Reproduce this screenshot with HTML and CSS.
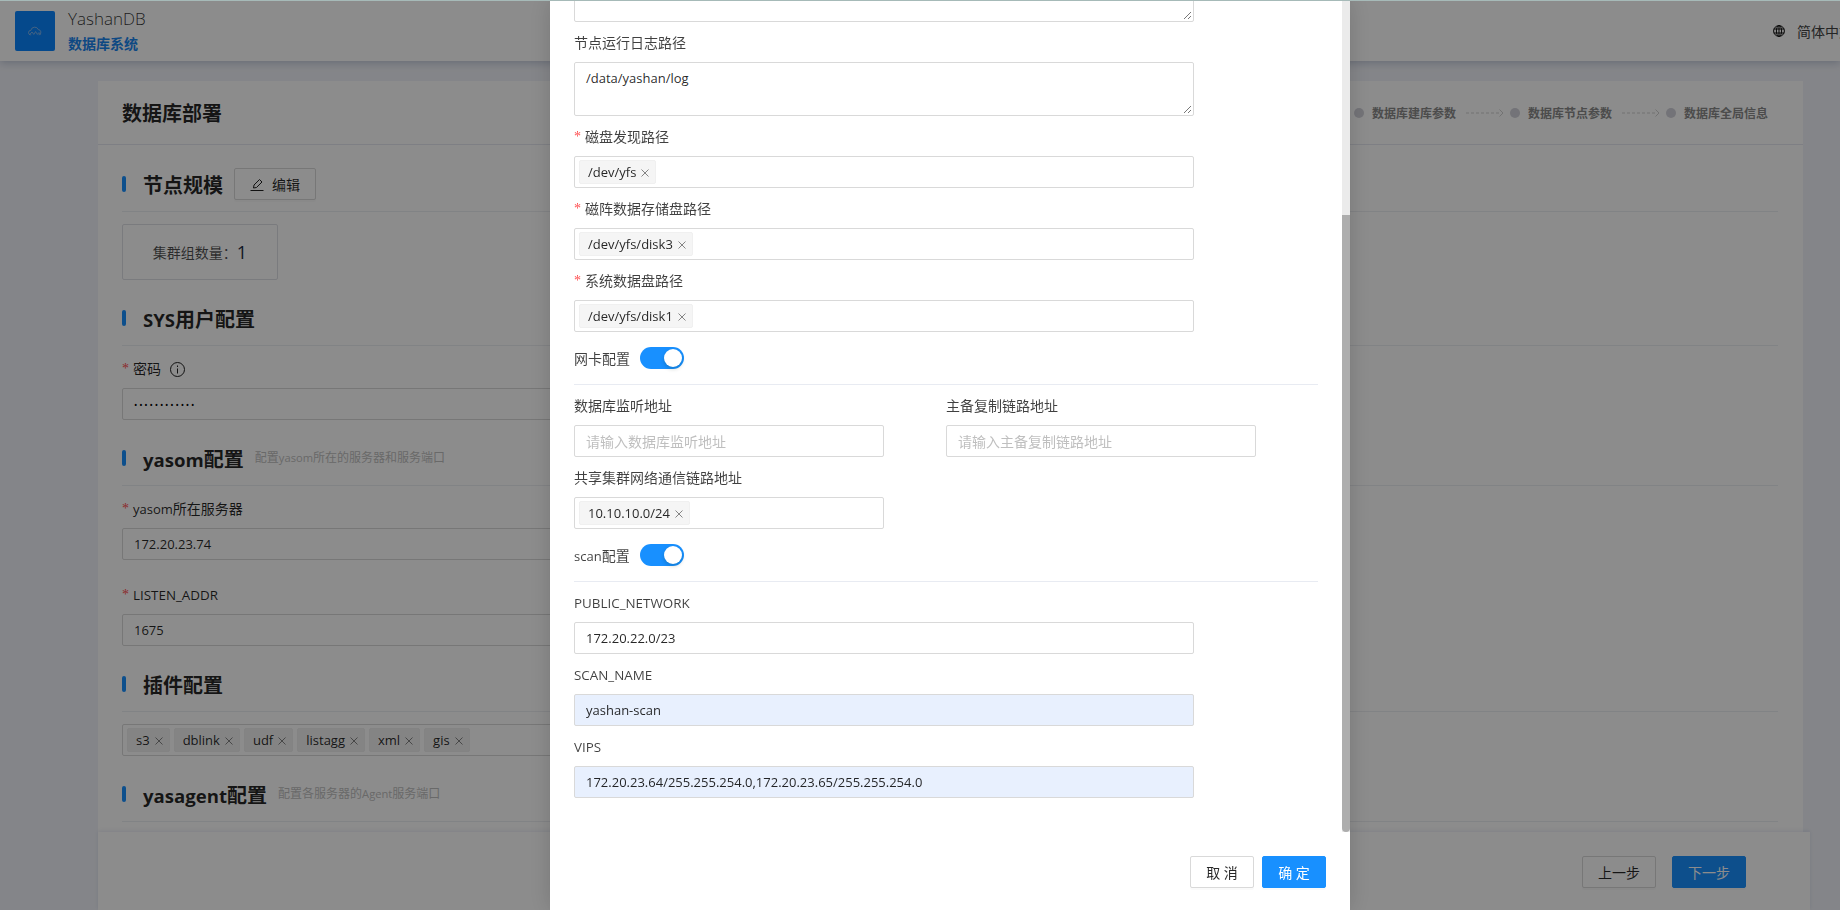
FILE: index.html
```html
<!DOCTYPE html>
<html lang="zh-CN">
<head>
<meta charset="utf-8">
<title>YashanDB 数据库部署</title>
<link rel="stylesheet" href="styles.css">
</head>
<body>
<div class="topline"></div>
<div class="app">
  <header class="topbar">
    <div class="logo">
      <svg width="14" height="10" viewBox="0 0 14 10" fill="none" stroke="#a9c4e6" stroke-width=".7"><path d="M3.2 8.800H2.600A2.200 2.200 0 0 1 2.800 4.400 4 4 0 0 1 10.400 3.600 2.700 2.700 0 0 1 11.200 8.800H10.600"/><path d="M1.600 8.600 4 6l1.800 2.400L7.600 5.600l1.800 2.800L11 6.600 12.600 8.600"/></svg>
    </div>
    <div class="brand">
      <div class="brand-name">YashanDB</div>
      <div class="brand-sub">数据库系统</div>
    </div>
    <div class="lang">
      <svg width="12" height="12" viewBox="0 0 12 12" fill="none" stroke="#111" stroke-width="1"><circle cx="6" cy="6" r="5.400"/><ellipse cx="6" cy="6" rx="2.600" ry="5.400"/><path d="M.8 4h10.400M.8 8h10.400M6 .6v10.800"/></svg>
      <span>简体中文</span>
    </div>
  </header>
  <main class="card">
    <div class="card-head">
      <h1 class="card-title">数据库部署</h1>
      <div class="steps">
        <span class="dot"></span><span class="step-text">数据库建库参数</span>
        <svg class="step-arrow" width="38" height="8" viewBox="0 0 38 8" fill="none" stroke="#cfcfcf"><path d="M0 4h33" stroke-dasharray="3 2"/><path d="M33.500 .5 37 4l-3.500 3.500"/></svg>
        <span class="dot"></span><span class="step-text">数据库节点参数</span>
        <svg class="step-arrow" width="38" height="8" viewBox="0 0 38 8" fill="none" stroke="#cfcfcf"><path d="M0 4h33" stroke-dasharray="3 2"/><path d="M33.500 .5 37 4l-3.500 3.500"/></svg>
        <span class="dot"></span><span class="step-text">数据库全局信息</span>
      </div>
    </div>
    <div class="card-body">
      <section class="section">
        <div class="sec-head">
          <h2 class="sec-title">节点规模</h2>
          <button class="btn btn-edit">
            <svg width="14" height="13" viewBox="0 0 14 13" fill="none" stroke="#222" stroke-width="1"><path d="M.5 12.500h13"/><path d="M3.500 10 4 7 9.500 1.500l2.500 2.500L6.500 9.500z"/></svg>
            <span>编辑</span>
          </button>
        </div>
        <div class="stat"><span class="stat-label">集群组数量：</span><span class="stat-value">1</span></div>
      </section>
      <section class="section">
        <div class="sec-head"><h2 class="sec-title"><span class="lt">SYS</span>用户配置</h2></div>
        <div class="page-item">
          <div class="label"><span class="star">*</span>密码
            <svg class="info" width="15" height="15" viewBox="0 0 15 15" fill="none" stroke="#222"><circle cx="7.500" cy="7.500" r="7"/><path d="M7.500 6.500v5M7.500 3.500v1.500"/></svg>
          </div>
          <div class="field dots">••••••••••••</div>
        </div>
      </section>
      <section class="section">
        <div class="sec-head"><h2 class="sec-title"><span class="lt">yasom</span>配置</h2><span class="hint">配置<span class="lt">yasom</span>所在的服务器和服务端口</span></div>
        <div class="page-item">
          <div class="label"><span class="star">*</span><span class="lt">yasom</span>所在服务器</div>
          <div class="field">172.20.23.74</div>
        </div>
        <div class="page-item">
          <div class="label"><span class="star">*</span><span class="caps">LISTEN_ADDR</span></div>
          <div class="field">1675</div>
        </div>
      </section>
      <section class="section">
        <div class="sec-head"><h2 class="sec-title">插件配置</h2></div>
        <div class="field tags">
          <span class="tag">s3<svg class="x" viewBox="0 0 8 8"><path d="M.5.5l7 7M7.500.5l-7 7"/></svg></span>
          <span class="tag">dblink<svg class="x" viewBox="0 0 8 8"><path d="M.5.5l7 7M7.500.5l-7 7"/></svg></span>
          <span class="tag">udf<svg class="x" viewBox="0 0 8 8"><path d="M.5.5l7 7M7.500.5l-7 7"/></svg></span>
          <span class="tag">listagg<svg class="x" viewBox="0 0 8 8"><path d="M.5.5l7 7M7.500.5l-7 7"/></svg></span>
          <span class="tag">xml<svg class="x" viewBox="0 0 8 8"><path d="M.5.5l7 7M7.500.5l-7 7"/></svg></span>
          <span class="tag">gis<svg class="x" viewBox="0 0 8 8"><path d="M.5.5l7 7M7.500.5l-7 7"/></svg></span>
        </div>
      </section>
      <section class="section">
        <div class="sec-head"><h2 class="sec-title"><span class="lt">yasagent</span>配置</h2><span class="hint">配置各服务器的<span class="lt">Agent</span>服务端口</span></div>
      </section>
    </div>
  </main>
  <footer class="page-foot">
    <button class="btn btn-wide">上一步</button>
    <button class="btn btn-wide btn-primary">下一步</button>
  </footer>
</div>
<div class="mask"></div>
<div class="modal">
  <div class="modal-body">
    <div class="form">
      <div class="field area area-cut"><svg class="grip" width="9" height="9" viewBox="0 0 9 9" stroke="#777"><path d="M1 8 8 1M5 8 8 5"/></svg></div>
      <div>
        <div class="mlabel">节点运行日志路径</div>
        <div class="field area">/data/yashan/log<svg class="grip" width="9" height="9" viewBox="0 0 9 9" stroke="#777"><path d="M1 8 8 1M5 8 8 5"/></svg></div>
      </div>
      <div>
        <div class="mlabel"><span class="star">*</span>磁盘发现路径</div>
        <div class="field tags wide"><span class="tag light">/dev/yfs<svg class="x" viewBox="0 0 8 8"><path d="M.5.5l7 7M7.500.5l-7 7"/></svg></span></div>
      </div>
      <div>
        <div class="mlabel"><span class="star">*</span>磁阵数据存储盘路径</div>
        <div class="field tags wide"><span class="tag light">/dev/yfs/disk3<svg class="x" viewBox="0 0 8 8"><path d="M.5.5l7 7M7.500.5l-7 7"/></svg></span></div>
      </div>
      <div>
        <div class="mlabel"><span class="star">*</span>系统数据盘路径</div>
        <div class="field tags wide"><span class="tag light">/dev/yfs/disk1<svg class="x" viewBox="0 0 8 8"><path d="M.5.5l7 7M7.500.5l-7 7"/></svg></span></div>
      </div>
      <div class="switch-row"><span class="switch-label">网卡配置</span><span class="switch"></span></div>
      <div class="rule"></div>
      <div class="pair">
        <div>
          <div class="mlabel">数据库监听地址</div>
          <div class="field placeholder">请输入数据库监听地址</div>
        </div>
        <div>
          <div class="mlabel">主备复制链路地址</div>
          <div class="field placeholder">请输入主备复制链路地址</div>
        </div>
        <div>
          <div class="mlabel">共享集群网络通信链路地址</div>
          <div class="field tags"><span class="tag light">10.10.10.0/24<svg class="x" viewBox="0 0 8 8"><path d="M.5.5l7 7M7.500.5l-7 7"/></svg></span></div>
        </div>
      </div>
      <div class="switch-row"><span class="switch-label"><span class="lt">scan</span>配置</span><span class="switch"></span></div>
      <div class="rule"></div>
      <div>
        <div class="mlabel"><span class="caps">PUBLIC_NETWORK</span></div>
        <div class="field wide">172.20.22.0/23</div>
      </div>
      <div>
        <div class="mlabel"><span class="caps">SCAN_NAME</span></div>
        <div class="field wide autofill">yashan-scan</div>
      </div>
      <div>
        <div class="mlabel"><span class="caps">VIPS</span></div>
        <div class="field wide autofill">172.20.23.64/255.255.254.0,172.20.23.65/255.255.254.0</div>
      </div>
    </div>
  </div>
  <div class="scroll-track"><div class="scroll-thumb"></div></div>
  <div class="modal-foot">
    <button class="btn btn-modal">取 消</button>
    <button class="btn btn-modal btn-primary">确 定</button>
  </div>
</div>
</body>
</html>
```
FILE: styles.css
```css
* { box-sizing: border-box; }
html, body { margin: 0; height: 100%; overflow: hidden; }
body {
  background: #f1f3f9;
  font-family: "Open Sans", "Noto Sans CJK SC", sans-serif;
  font-size: 14px;
  color: rgba(0, 0, 0, .85);
}
.lt { font-size: .93em; }
.caps { font-size: 13.4px; }
.topline { position: absolute; top: 0; left: 0; right: 0; height: 1px; background: #a6bab8; z-index: 10; }
.app { height: 910px; display: flex; flex-direction: column; position: relative; }

.topbar {
  height: 61px; flex: none; background: #fff; display: flex; align-items: center;
  padding-left: 15px; box-shadow: 0 2px 8px rgba(0, 30, 90, .22); overflow: hidden; position: relative;
}
.logo { width: 40px; height: 40px; background: #0a86ff; border-radius: 2px; display: flex; align-items: center; justify-content: center; }
.brand { margin-left: 13px; padding-top: 2px; }
.brand-name { font-size: 17px; line-height: 22px; font-weight: 300; color: rgba(0,0,0,.8); }
.brand-sub { font-size: 14px; line-height: 22px; font-weight: 700; color: #1a85ee; margin-top: 3px; }
.lang { margin-left: auto; display: flex; align-items: center; gap: 12px; white-space: nowrap; flex: none; width: 67px; color: #444; }
.lang svg { flex: none; }
.lang span { flex: none; }

.card { margin: 20px 37px 0 98px; flex: 1; background: #fff; overflow: hidden; }
.card-head { height: 64px; border-bottom: 1px solid #e6e8f0; display: flex; align-items: center; justify-content: space-between; padding: 1px 35px 0 24px; }
.card-title { margin: 0; font-size: 20px; font-weight: 700; line-height: 28px; padding-top: 1px; }
.steps { display: flex; align-items: center; }
.dot { width: 10px; height: 10px; border-radius: 50%; background: #d2d2da; margin-right: 8px; }
.step-text { font-size: 12px; font-weight: 700; color: #8a8a8a; }
.step-arrow { margin: 0 6px 0 10px; }
.card-body { padding: 23px 25px 0 24px; }
.section + .section { margin-top: 22px; }
.sec-head { display: flex; align-items: flex-start; height: 44px; border-bottom: 1px solid #eceef2; margin-bottom: 12px; }
.sec-title { margin: 0; font-size: 20px; line-height: 32px; height: 32px; padding: 2px 0 0 21px; font-weight: 700; position: relative; white-space: nowrap; }
.sec-title::before { content: ""; position: absolute; left: 0; top: 8px; width: 4px; height: 16px; border-radius: 2px; background: #1890ff; }
.hint { font-size: 12px; line-height: 32px; color: #c0c0c0; margin-left: 11px; }
.btn-edit { margin-left: 11px; width: 82px; height: 32px; gap: 8px; }
.stat { width: 156px; height: 56px; border: 1px solid #dfe1e6; border-radius: 2px; display: flex; align-items: center; justify-content: center; }
.stat-label { color: rgba(0,0,0,.7); }
.stat-value { font-size: 18px; color: #1c2b44; }
.page-item + .page-item { margin-top: 24px; }
.label { height: 22px; line-height: 22px; margin-bottom: 8px; display: flex; align-items: center; white-space: nowrap; }
.info { margin-left: 9px; }
.star { display: inline-block; width: 11px; color: #ff4d4f; font-family: "Liberation Serif", serif; flex: none; }

.field { height: 32px; max-width: 800px; border: 1px solid #d9d9d9; border-radius: 2px; background: #fff; padding: 0 11px; display: flex; align-items: center; white-space: nowrap; font-size: 13px; color: rgba(0,0,0,.85); }
.dots { font-size: 9px; letter-spacing: 1.800px; color: #000; }
.tags { padding: 0 4px; gap: 4px; }
.tag { height: 24px; background: #f0f0f0; border: 1px solid #eee; border-radius: 2px; padding: 0 6px 0 8px; display: inline-flex; align-items: center; gap: 5px; }
.tag.light { background: #f5f5f5; border-color: #f0f0f0; }
.x { width: 8px; height: 8px; fill: none; stroke: #777; stroke-width: .9; flex: none; margin-top: 1px; }

.btn { display: inline-flex; align-items: center; justify-content: center; height: 32px; padding: 0; font: inherit; color: rgba(0,0,0,.85); background: #fff; border: 1px solid #d9d9d9; border-radius: 2px; box-shadow: 0 2px 0 rgba(0,0,0,.02); }
.btn-primary { background: #1890ff; border-color: #1890ff; color: #fff; }
.btn-wide { width: 74px; }
.btn-modal { width: 64px; }

.page-foot { position: absolute; left: 98px; right: 30px; bottom: 0; height: 78px; background: #fff; padding: 24px 64px 0 0; display: flex; justify-content: flex-end; gap: 16px; box-shadow: 0 -1px 4px rgba(40, 60, 160, .1); }

.mask { position: fixed; inset: 0; background: rgba(0, 0, 0, .45); }
.modal { position: fixed; top: 0; bottom: 0; left: 550px; width: 800px; background: #fff; display: flex; flex-direction: column; box-shadow: 0 0 22px rgba(0,0,0,.16); }
.modal-body { flex: 1; min-height: 0; overflow: hidden; padding: 0 32px 0 24px; }
.form { display: flex; flex-direction: column; gap: 10px; }
.mlabel { height: 22px; line-height: 22px; margin-bottom: 8px; color: rgba(0,0,0,.75); white-space: nowrap; display: flex; align-items: center; }
.area { height: 54px; width: 620px; align-items: flex-start; padding-top: 4px; line-height: 22px; position: relative; }
.area-cut { margin-top: -32px; }
.grip { position: absolute; right: 1px; bottom: 1px; }
.wide { width: 620px; }
.switch-row { height: 32px; display: flex; align-items: center; gap: 10px; color: rgba(0,0,0,.75); }
.switch { width: 44px; height: 22px; border-radius: 11px; background: #1890ff; position: relative; }
.switch::after { content: ""; position: absolute; right: 2px; top: 2px; width: 18px; height: 18px; border-radius: 50%; background: #fff; box-shadow: 0 2px 4px rgba(0,35,11,.2); }
.rule { height: 1px; background: #e8ebf2; }
.pair { display: grid; grid-template-columns: 310px 310px; column-gap: 62px; row-gap: 10px; }
.placeholder { color: #bfbfbf; font-size: 14px; }
.autofill { background: #e8f0fe; }
.scroll-track { position: absolute; top: 0; right: 0; width: 8px; height: 832px; background: #ebebeb; }
.scroll-thumb { margin-top: 215px; height: 617px; background: #adadad; border-radius: 0 0 4px 4px; }
.modal-foot { height: 78px; flex: none; padding: 24px 24px 0 0; display: flex; justify-content: flex-end; gap: 8px; }
```
